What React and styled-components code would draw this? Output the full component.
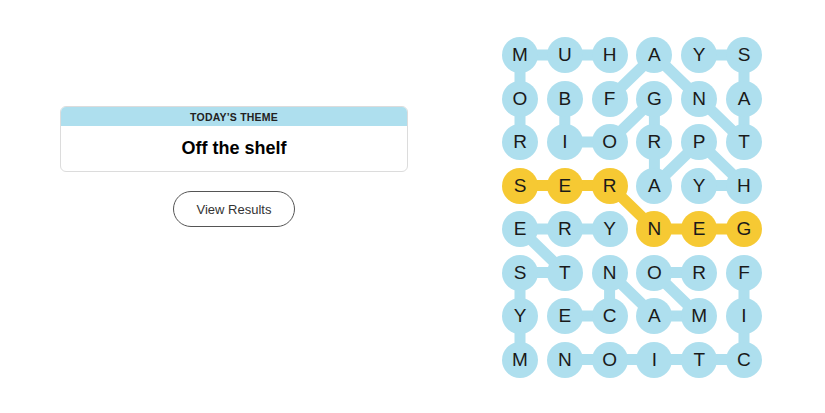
import * as React from "react";
import styled, { createGlobalStyle } from "styled-components";

const BLUE = "#aedfee";
const YELLOW = "#f6c933";
const COL = 44.8;
const ROW = 43.5;
const SIZE = 36;

const GlobalStyle = createGlobalStyle`
    body {
        margin: 0;
        background: #ffffff;
        font-family: "Liberation Sans", Arial, sans-serif;
    }
`;

const Page = styled.div`
    display: flex;
    flex-direction: row;
    align-items: flex-start;
    padding: 37px 0 0 60px;
    gap: 93px;
`;

const LeftColumn = styled.div`
    width: 348px;
    margin-top: 69px;
    display: flex;
    flex-direction: column;
    align-items: center;
    gap: 19px;
`;

const ThemeCard = styled.div`
    width: 100%;
    box-sizing: border-box;
    border: 1px solid #dcdcdc;
    border-radius: 6px;
    overflow: hidden;
`;

const ThemeHeader = styled.div`
    height: 19px;
    background-color: ${BLUE};
    display: flex;
    align-items: center;
    justify-content: center;
    font-size: 10.5px;
    font-weight: 700;
    letter-spacing: 0.2px;
    color: #222;
`;

const ThemeBody = styled.div`
    height: 45px;
    display: flex;
    align-items: center;
    justify-content: center;
    font-size: 18px;
    font-weight: 700;
    color: #000;
`;

const ResultsButton = styled.button`
    width: 122px;
    height: 36px;
    border: 1px solid #555;
    border-radius: 18px;
    background: #fff;
    font-family: "Liberation Sans", Arial, sans-serif;
    font-size: 13px;
    color: #333;
    cursor: pointer;
`;

const Board = styled.div`
    position: relative;
    display: grid;
    grid-template-columns: repeat(6, ${SIZE}px);
    grid-auto-rows: ${SIZE}px;
    column-gap: ${COL - SIZE}px;
    row-gap: ${ROW - SIZE}px;
    margin-left: 1px;
`;

const Links = styled.svg`
    position: absolute;
    left: 0;
    top: 0;
    overflow: visible;
    pointer-events: none;
`;

const Letter = styled.div`
    position: relative;
    width: ${SIZE}px;
    height: ${SIZE}px;
    border-radius: 50%;
    background-color: ${(p) => (p.$spangram ? YELLOW : BLUE)};
    display: flex;
    align-items: center;
    justify-content: center;
    font-size: 19px;
    color: #1a1a1a;
`;

const letters = [
    "MUHAYS",
    "OBFGNA",
    "RIORPT",
    "SERAYH",
    "ERYNEG",
    "STNORF",
    "YECAMI",
    "MNOITC",
];

const words = [
    { cells: [[2, 0], [1, 0], [0, 0], [0, 1], [0, 2]] },
    { cells: [[2, 1], [3, 0], [4, 1], [5, 2], [5, 1], [5, 0], [4, 0]] },
    { cells: [[1, 1], [1, 2], [2, 2], [3, 1], [3, 2], [3, 3], [4, 2], [5, 3], [4, 3]] },
    { cells: [[5, 4], [4, 4], [3, 4], [2, 3], [1, 3], [0, 3]], spangram: true },
    { cells: [[0, 7], [0, 6], [0, 5], [1, 5], [0, 4], [1, 4], [2, 4]] },
    { cells: [[4, 5], [3, 5], [4, 6], [3, 6], [2, 5], [2, 6], [1, 6]] },
    { cells: [[5, 5], [5, 6], [5, 7], [4, 7], [3, 7], [2, 7], [1, 7]] },
];

const spangramCells = new Set(
    words.filter((w) => w.spangram).flatMap((w) => w.cells.map(([c, r]) => `${c}-${r}`))
);

const center = ([c, r]) => [SIZE / 2 + c * COL, SIZE / 2 + r * ROW];

const App = () => {
    return (
        <Page>
            <GlobalStyle />
            <LeftColumn>
                <ThemeCard>
                    <ThemeHeader>TODAY’S THEME</ThemeHeader>
                    <ThemeBody>Off the shelf</ThemeBody>
                </ThemeCard>
                <ResultsButton>View Results</ResultsButton>
            </LeftColumn>
            <Board>
                <Links width="260" height="342">
                    {words.map((w, i) => (
                        <polyline
                            key={i}
                            points={w.cells.map((cell) => center(cell).join(",")).join(" ")}
                            fill="none"
                            stroke={w.spangram ? YELLOW : BLUE}
                            strokeWidth="11"
                            strokeLinejoin="round"
                        />
                    ))}
                </Links>
                {letters.map((row, r) =>
                    row.split("").map((ch, c) => (
                        <Letter key={`${c}-${r}`} $spangram={spangramCells.has(`${c}-${r}`)}>
                            {ch}
                        </Letter>
                    ))
                )}
            </Board>
        </Page>
    );
};

export default App;
